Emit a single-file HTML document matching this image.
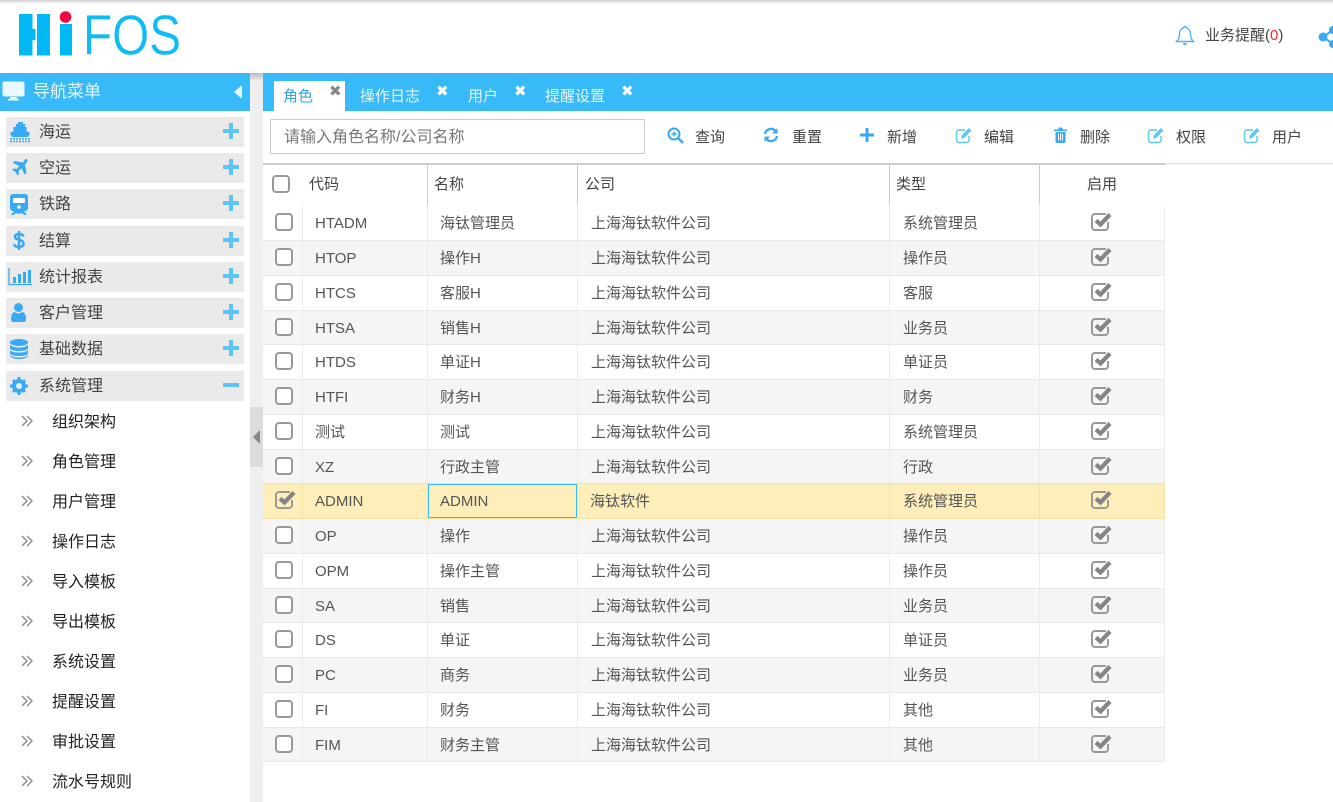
<!DOCTYPE html>
<html lang="zh"><head><meta charset="utf-8"><title>HiFOS</title>
<style>
*{box-sizing:border-box}
html,body{margin:0;padding:0;width:1333px;height:802px;overflow:hidden;background:#fff;font-family:"Liberation Sans","Noto Sans CJK SC",sans-serif;color:#555}
.a{position:absolute;white-space:nowrap}
svg{position:absolute;display:block}
.m{position:absolute;left:6px;width:238px;height:30px;background:#eaeaea;font-size:16px;line-height:32px;color:#444;padding-left:33px}
.m .p{position:absolute;left:217px;top:6px;width:16px;height:16px}
.m .p:before{content:"";position:absolute;left:0;top:6px;width:16px;height:4px;background:#5cc4f7}
.m .p:after{content:"";position:absolute;left:6px;top:0;width:4px;height:16px;background:#5cc4f7}
.m .q:after{display:none}
.s{position:absolute;left:52px;font-size:16px;line-height:24px;color:#222;white-space:nowrap}
.t{position:absolute;font-size:15px;line-height:20px;top:87px;color:#e6f6fe;white-space:nowrap}
.x{position:absolute;top:82px;font-size:15px;line-height:18px;font-weight:bold;color:#fff;font-family:"DejaVu Sans",sans-serif}
.b{position:absolute;top:128px;font-size:15px;line-height:20px;color:#444;white-space:nowrap}
.h{position:absolute;top:175px;font-size:15px;line-height:20px;color:#444;white-space:nowrap}
.r{position:absolute;left:263px;width:902px;height:36px;border-top:1px solid #e8e8e8;font-size:15px;line-height:35px;color:#555}
.w{background:#fff}.g{background:#f5f5f5}.y{background:#fdeeba;border-top-color:#f5e2a5}
.r span{position:absolute;top:0;white-space:nowrap}
.r i{position:absolute;top:0;width:1px;height:100%;background:#ebebeb}
.r b{position:absolute;left:12px;top:7px;width:18px;height:18px;border:2px solid #999;border-radius:4px;background:#fff}
.r u{position:absolute;left:828px;top:6px;width:22px;height:19px;text-decoration:none}
.y i{background:#f5e2a5}
</style></head><body>
<svg width="0" height="0" style="position:absolute"><defs>
<symbol id="ck" viewBox="0 0 22 19"><path d="M15 2H4a3 3 0 0 0-3 3v10a3 3 0 0 0 3 3h10a3 3 0 0 0 3-3v-5" fill="none" stroke="#999" stroke-width="2"/><path d="M5 8.500l4.500 4L19 2.500" fill="none" stroke="#858585" stroke-width="4.200"/></symbol>
<symbol id="ed" viewBox="0 0 18 18"><path d="M14 10v4a2.500 2.500 0 0 1-2.500 2.500H4A2.500 2.500 0 0 1 1.500 14V6.500A2.500 2.500 0 0 1 4 4h6" fill="none" stroke="#5cc4f7" stroke-width="1.400"/><path d="M6 12.500l.6-3L14 2l2.500 2.500L9 12z" fill="#5cc4f7"/></symbol>
<symbol id="ch" viewBox="0 0 12 12"><path d="M1 1l5 5-5 5M6 1l5 5-5 5" fill="none" stroke="#8a8a8a" stroke-width="1.400"/></symbol>
</defs></svg>

<!-- header -->
<div class="a" style="left:0;top:0;width:1333px;height:4px;background:linear-gradient(#cfcfcf,#fff)"></div>
<svg style="left:0;top:0" width="200" height="70">
<rect x="19" y="14" width="13.500" height="41.500" fill="#02b8f5"/><rect x="37" y="14" width="13" height="41.500" fill="#02b8f5"/><rect x="32" y="29" width="3.500" height="11" fill="#02b8f5"/>
<rect x="60" y="24" width="12" height="31.500" fill="#02b8f5"/><circle cx="65.500" cy="17" r="5.800" fill="#ee0a42"/>
<text x="83" y="54.500" font-family="Liberation Sans" font-size="57" fill="#0cbcf6" stroke="#fff" stroke-width="0.300" textLength="98" lengthAdjust="spacingAndGlyphs">FOS</text>
</svg>
<svg style="left:1175px;top:25px" width="20" height="21" viewBox="0 0 20 21"><path d="M10 1.500a1.500 1.500 0 0 1 1.500 1.500c3 .8 4 3.500 4 6 0 4 1 5.500 3 7.500H1.500c2-2 3-3.500 3-7.500 0-2.500 1-5.200 4-6A1.500 1.500 0 0 1 10 1.500z" fill="none" stroke="#4fb4f5" stroke-width="1.400"/><path d="M8 18a2 2 0 0 0 4 0z" fill="#4fb4f5"/></svg>
<div class="a" style="left:1205px;top:25px;font-size:15px;line-height:21px;color:#444">业务提醒(<span style="color:#f22">0</span>)</div>
<svg style="left:1318px;top:26px" width="15" height="22" viewBox="0 0 15 22"><circle cx="5" cy="11" r="4.500" fill="#38a9f5"/><circle cx="15" cy="4" r="4" fill="#38a9f5"/><circle cx="15" cy="18" r="4" fill="#38a9f5"/><path d="M5 11L15 4M5 11l10 7" stroke="#38a9f5" stroke-width="2"/></svg>

<!-- strip -->
<div class="a" style="left:250px;top:73px;width:13px;height:729px;background:#efefef"></div>
<div class="a" style="left:250px;top:73px;width:13px;height:8px;background:linear-gradient(#bbb,#efefef)"></div>
<div class="a" style="left:250px;top:407px;width:13px;height:60px;background:#dcdcdc"></div>
<svg style="left:253px;top:430px" width="8" height="14"><path d="M7 0v14L0 7z" fill="#888"/></svg>

<!-- nav title -->
<div class="a" style="left:0;top:73px;width:250px;height:38px;background:#38b9f8"></div>
<svg style="left:2px;top:81px" width="23" height="20" viewBox="0 0 23 20"><rect x="1" y="1" width="21" height="14" rx="1.500" fill="#eaf8ff" stroke="#eaf8ff"/><rect x="8" y="16" width="7" height="2" fill="#eaf8ff"/><rect x="6" y="18" width="11" height="1.500" fill="#eaf8ff"/></svg>
<div class="a" style="left:33px;top:80px;font-size:17px;line-height:24px;color:#e6f6fe">导航菜单</div>
<svg style="left:234px;top:85px" width="8" height="14"><path d="M8 0v14L0 7z" fill="#e6f6fe"/></svg>

<!-- menu -->
<div class="m" style="top:117px">海运<span class="p"></span></div>
<div class="m" style="top:153px">空运<span class="p"></span></div>
<div class="m" style="top:189px">铁路<span class="p"></span></div>
<div class="m" style="top:226px">结算<span class="p"></span></div>
<div class="m" style="top:262px">统计报表<span class="p"></span></div>
<div class="m" style="top:298px">客户管理<span class="p"></span></div>
<div class="m" style="top:334px">基础数据<span class="p"></span></div>
<div class="m" style="top:371px">系统管理<span class="p q"></span></div>

<svg style="left:9px;top:121px" width="23" height="22" viewBox="0 0 23 22"><path d="M9 1h5v2h2v3h1.500v4l3.500 2-2 4H3L1 12l3.500-2V6H7V3h2z" fill="#38aaf5"/><path d="M1 18h21M1 20.500h21" stroke="#38aaf5" stroke-width="1.500" stroke-dasharray="2 1"/></svg>
<svg style="left:11px;top:159px" width="17" height="17" viewBox="0 0 17 17"><path d="M14 0c2 0 3 1 2.500 2.500L14 5.500 15.500 14l-2 1.500-3-6.500-3 3 .5 3-1.500 1.500L4.500 13 1 11l1.500-1.500 3 .5 3-3L2 4l1.500-2L12 3.500l2-3z" fill="#38aaf5"/></svg>
<svg style="left:10px;top:194px" width="18" height="21" viewBox="0 0 18 21"><path d="M3 0h12a3 3 0 0 1 3 3v11a3 3 0 0 1-3 3H3a3 3 0 0 1-3-3V3a3 3 0 0 1 3-3z" fill="#38aaf5"/><rect x="3" y="4" width="12" height="5" rx="1" fill="#fff"/><circle cx="9" cy="13" r="1.800" fill="#fff"/><path d="M4 17h10l3 4h-3l-1-1.500H5L4 21H1z" fill="#38aaf5"/></svg>
<svg style="left:13px;top:230px" width="12" height="21" viewBox="0 0 12 21"><path d="M10.500 6.500C10 4.500 8 4 6 4 3.500 4 2 5 2 6.700c0 4 8.500 2 8.500 7 0 2-1.700 3.300-4.500 3.300-2.500 0-4.300-1-5-3" fill="none" stroke="#38aaf5" stroke-width="2.500"/><path d="M6 1v19" stroke="#38aaf5" stroke-width="2.500"/></svg>
<svg style="left:8px;top:268px" width="24" height="18" viewBox="0 0 24 18"><path d="M1 0v16.500h23" fill="none" stroke="#38aaf5" stroke-width="1.300"/><path d="M5 9h3v6H5zM10 6h3v9h-3zM15 4h3v11h-3zM20 2h3v13h-3z" fill="#38aaf5"/></svg>
<svg style="left:11px;top:303px" width="15" height="19" viewBox="0 0 15 19"><circle cx="7.500" cy="4.500" r="4.500" fill="#38aaf5"/><path d="M0 16c0-5 2-7 4-7 1 1 2 1.500 3.500 1.500S10 10 11 9c2 0 4 2 4 7 0 2-1 3-3 3H3c-2 0-3-1-3-3z" fill="#38aaf5"/></svg>
<svg style="left:10px;top:339px" width="18" height="20" viewBox="0 0 18 20"><ellipse cx="9" cy="3.500" rx="9" ry="3.500" fill="#38aaf5"/><path d="M0 5.500c1 2 5 3 9 3s8-1 9-3V9.500c-1 2-5 2.500-9 2.500s-8-.5-9-2.500zM0 11c1 2 5 2.500 9 2.500s8-.5 9-2.500v3.500c-1 2-5 2.500-9 2.500s-8-.5-9-2.500zM0 16c1 2 5 2.500 9 2.500s8-.5 9-2.500v1c-1 2-5 3-9 3s-8-1-9-3z" fill="#38aaf5"/></svg>
<svg style="left:10px;top:377px" width="18" height="18" viewBox="0 0 18 18"><circle cx="9" cy="9" r="5" fill="none" stroke="#38aaf5" stroke-width="4"/><path d="M7.500 0h3v4h-3zM7.500 14h3v4h-3zM0 7.500h4v3H0zM14 7.500h4v3h-4zM2 4l2-2 3 3-2 2zM11 13l2-2 3 3-2 2zM14 2l2 2-3 3-2-2zM5 11l2 2-3 3-2-2z" fill="#38aaf5"/></svg>

<svg style="left:21px;top:415px" width="12" height="12"><use href="#ch"/></svg><div class="s" style="top:411px">组织架构</div>
<svg style="left:21px;top:455px" width="12" height="12"><use href="#ch"/></svg><div class="s" style="top:451px">角色管理</div>
<svg style="left:21px;top:495px" width="12" height="12"><use href="#ch"/></svg><div class="s" style="top:491px">用户管理</div>
<svg style="left:21px;top:535px" width="12" height="12"><use href="#ch"/></svg><div class="s" style="top:531px">操作日志</div>
<svg style="left:21px;top:575px" width="12" height="12"><use href="#ch"/></svg><div class="s" style="top:571px">导入模板</div>
<svg style="left:21px;top:615px" width="12" height="12"><use href="#ch"/></svg><div class="s" style="top:611px">导出模板</div>
<svg style="left:21px;top:655px" width="12" height="12"><use href="#ch"/></svg><div class="s" style="top:651px">系统设置</div>
<svg style="left:21px;top:695px" width="12" height="12"><use href="#ch"/></svg><div class="s" style="top:691px">提醒设置</div>
<svg style="left:21px;top:735px" width="12" height="12"><use href="#ch"/></svg><div class="s" style="top:731px">审批设置</div>
<svg style="left:21px;top:775px" width="12" height="12"><use href="#ch"/></svg><div class="s" style="top:771px">流水号规则</div>

<!-- tabs -->
<div class="a" style="left:263px;top:73px;width:1070px;height:38px;background:#38b9f8"></div>
<div class="a" style="left:274px;top:81px;width:71px;height:30px;background:#fff"></div>
<div class="t" style="left:283px;color:#38a0e0">角色</div><div class="x" style="left:329px;color:#888">✖</div>
<div class="t" style="left:360px">操作日志</div><div class="x" style="left:436px">✖</div>
<div class="t" style="left:468px">用户</div><div class="x" style="left:514px">✖</div>
<div class="t" style="left:545px">提醒设置</div><div class="x" style="left:621px">✖</div>

<!-- toolbar -->
<div class="a" style="left:270px;top:119px;width:375px;height:35px;border:1px solid #ccc;font-size:16px;line-height:35px;padding-left:13px;color:#777">请输入角色名称/公司名称</div>
<svg style="left:667px;top:127px" width="17" height="17" viewBox="0 0 17 17"><circle cx="7" cy="7" r="5.500" fill="none" stroke="#38aaf5" stroke-width="2"/><path d="M11 11l5 5" stroke="#38aaf5" stroke-width="2.500"/><path d="M4.500 7h5M7 4.500v5" stroke="#38aaf5" stroke-width="1.500"/></svg>
<div class="b" style="left:695px">查询</div>
<svg style="left:763px;top:127px" width="16" height="16" viewBox="0 0 16 16"><path d="M2 7a6 6 0 0 1 10.500-3" fill="none" stroke="#38aaf5" stroke-width="2.400"/><path d="M14.500 1v5.500H9z" fill="#38aaf5"/><path d="M14 9a6 6 0 0 1-10.500 3" fill="none" stroke="#38aaf5" stroke-width="2.400"/><path d="M1.500 15V9.500H7z" fill="#38aaf5"/></svg>
<div class="b" style="left:792px">重置</div>
<svg style="left:860px;top:128px" width="14" height="14"><path d="M5.500 0h3v5.500H14v3H8.500V14h-3V8.500H0v-3h5.500z" fill="#38aaf5"/></svg>
<div class="b" style="left:887px">新增</div>
<svg style="left:955px;top:126px" width="18" height="18"><use href="#ed"/></svg>
<div class="b" style="left:984px">编辑</div>
<svg style="left:1054px;top:127px" width="13" height="16" viewBox="0 0 13 16"><path d="M0 2.500h13v1.500H0zM4 2.500L5 .5h3l1 2z" fill="#38aaf5"/><path d="M1.500 5h10v9.500a1.500 1.500 0 0 1-1.500 1.500H3a1.500 1.500 0 0 1-1.500-1.500z" fill="#38aaf5"/><path d="M4.500 6.500v7M6.500 6.500v7M8.500 6.500v7" stroke="#fff"/></svg>
<div class="b" style="left:1080px">删除</div>
<svg style="left:1147px;top:126px" width="18" height="18"><use href="#ed"/></svg>
<div class="b" style="left:1176px">权限</div>
<svg style="left:1243px;top:126px" width="18" height="18"><use href="#ed"/></svg>
<div class="b" style="left:1272px">用户</div>

<!-- table head -->
<div class="a" style="left:263px;top:163px;width:1070px;height:1px;background:#ddd"></div>
<div class="a" style="left:263px;top:163px;width:902px;height:2px;background:#ccc"></div>
<div class="a" style="left:427px;top:165px;width:1px;height:40px;background:#ccc"></div>
<div class="a" style="left:577px;top:165px;width:1px;height:40px;background:#ccc"></div>
<div class="a" style="left:889px;top:165px;width:1px;height:40px;background:#ccc"></div>
<div class="a" style="left:1039px;top:165px;width:1px;height:40px;background:#ccc"></div>
<div class="a" style="left:272px;top:175px;width:18px;height:18px;border:2px solid #999;border-radius:4px"></div>
<div class="h" style="left:309px">代码</div><div class="h" style="left:434px">名称</div><div class="h" style="left:585px">公司</div><div class="h" style="left:896px">类型</div><div class="h" style="left:1087px">启用</div>

<!-- rows -->
<div class="r w" style="top:205px;border-top-color:#fff"><b></b><i style="left:39px"></i><i style="left:164px"></i><i style="left:314px"></i><i style="left:626px"></i><i style="left:776px"></i><i style="left:901px"></i><span style="left:52px">HTADM</span><span style="left:177px">海钛管理员</span><span style="left:328px">上海海钛软件公司</span><span style="left:640px">系统管理员</span><u><svg width="22" height="19"><use href="#ck"/></svg></u></div>
<div class="r g" style="top:240px"><b></b><i style="left:39px"></i><i style="left:164px"></i><i style="left:314px"></i><i style="left:626px"></i><i style="left:776px"></i><i style="left:901px"></i><span style="left:52px">HTOP</span><span style="left:177px">操作H</span><span style="left:328px">上海海钛软件公司</span><span style="left:640px">操作员</span><u><svg width="22" height="19"><use href="#ck"/></svg></u></div>
<div class="r w" style="top:275px"><b></b><i style="left:39px"></i><i style="left:164px"></i><i style="left:314px"></i><i style="left:626px"></i><i style="left:776px"></i><i style="left:901px"></i><span style="left:52px">HTCS</span><span style="left:177px">客服H</span><span style="left:328px">上海海钛软件公司</span><span style="left:640px">客服</span><u><svg width="22" height="19"><use href="#ck"/></svg></u></div>
<div class="r g" style="top:310px"><b></b><i style="left:39px"></i><i style="left:164px"></i><i style="left:314px"></i><i style="left:626px"></i><i style="left:776px"></i><i style="left:901px"></i><span style="left:52px">HTSA</span><span style="left:177px">销售H</span><span style="left:328px">上海海钛软件公司</span><span style="left:640px">业务员</span><u><svg width="22" height="19"><use href="#ck"/></svg></u></div>
<div class="r w" style="top:344px"><b></b><i style="left:39px"></i><i style="left:164px"></i><i style="left:314px"></i><i style="left:626px"></i><i style="left:776px"></i><i style="left:901px"></i><span style="left:52px">HTDS</span><span style="left:177px">单证H</span><span style="left:328px">上海海钛软件公司</span><span style="left:640px">单证员</span><u><svg width="22" height="19"><use href="#ck"/></svg></u></div>
<div class="r g" style="top:379px"><b></b><i style="left:39px"></i><i style="left:164px"></i><i style="left:314px"></i><i style="left:626px"></i><i style="left:776px"></i><i style="left:901px"></i><span style="left:52px">HTFI</span><span style="left:177px">财务H</span><span style="left:328px">上海海钛软件公司</span><span style="left:640px">财务</span><u><svg width="22" height="19"><use href="#ck"/></svg></u></div>
<div class="r w" style="top:414px"><b></b><i style="left:39px"></i><i style="left:164px"></i><i style="left:314px"></i><i style="left:626px"></i><i style="left:776px"></i><i style="left:901px"></i><span style="left:52px">测试</span><span style="left:177px">测试</span><span style="left:328px">上海海钛软件公司</span><span style="left:640px">系统管理员</span><u><svg width="22" height="19"><use href="#ck"/></svg></u></div>
<div class="r g" style="top:449px"><b></b><i style="left:39px"></i><i style="left:164px"></i><i style="left:314px"></i><i style="left:626px"></i><i style="left:776px"></i><i style="left:901px"></i><span style="left:52px">XZ</span><span style="left:177px">行政主管</span><span style="left:328px">上海海钛软件公司</span><span style="left:640px">行政</span><u><svg width="22" height="19"><use href="#ck"/></svg></u></div>
<div class="r y" style="top:483px"><i style="left:39px"></i><i style="left:164px"></i><i style="left:314px"></i><i style="left:626px"></i><i style="left:776px"></i><i style="left:901px"></i><svg style="left:12px;top:6px" width="22" height="19"><use href="#ck"/></svg><span style="left:52px">ADMIN</span><span style="left:165px;width:149px;height:34px;border:1px solid #38b9f8;padding-left:11px;line-height:33px">ADMIN</span><span style="left:327px">海钛软件</span><span style="left:640px">系统管理员</span><u><svg width="22" height="19"><use href="#ck"/></svg></u></div>
<div class="r g" style="top:518px;border-top-color:#f5e2a5"><b></b><i style="left:39px"></i><i style="left:164px"></i><i style="left:314px"></i><i style="left:626px"></i><i style="left:776px"></i><i style="left:901px"></i><span style="left:52px">OP</span><span style="left:177px">操作</span><span style="left:328px">上海海钛软件公司</span><span style="left:640px">操作员</span><u><svg width="22" height="19"><use href="#ck"/></svg></u></div>
<div class="r w" style="top:553px"><b></b><i style="left:39px"></i><i style="left:164px"></i><i style="left:314px"></i><i style="left:626px"></i><i style="left:776px"></i><i style="left:901px"></i><span style="left:52px">OPM</span><span style="left:177px">操作主管</span><span style="left:328px">上海海钛软件公司</span><span style="left:640px">操作员</span><u><svg width="22" height="19"><use href="#ck"/></svg></u></div>
<div class="r g" style="top:588px"><b></b><i style="left:39px"></i><i style="left:164px"></i><i style="left:314px"></i><i style="left:626px"></i><i style="left:776px"></i><i style="left:901px"></i><span style="left:52px">SA</span><span style="left:177px">销售</span><span style="left:328px">上海海钛软件公司</span><span style="left:640px">业务员</span><u><svg width="22" height="19"><use href="#ck"/></svg></u></div>
<div class="r w" style="top:622px"><b></b><i style="left:39px"></i><i style="left:164px"></i><i style="left:314px"></i><i style="left:626px"></i><i style="left:776px"></i><i style="left:901px"></i><span style="left:52px">DS</span><span style="left:177px">单证</span><span style="left:328px">上海海钛软件公司</span><span style="left:640px">单证员</span><u><svg width="22" height="19"><use href="#ck"/></svg></u></div>
<div class="r g" style="top:657px"><b></b><i style="left:39px"></i><i style="left:164px"></i><i style="left:314px"></i><i style="left:626px"></i><i style="left:776px"></i><i style="left:901px"></i><span style="left:52px">PC</span><span style="left:177px">商务</span><span style="left:328px">上海海钛软件公司</span><span style="left:640px">业务员</span><u><svg width="22" height="19"><use href="#ck"/></svg></u></div>
<div class="r w" style="top:692px"><b></b><i style="left:39px"></i><i style="left:164px"></i><i style="left:314px"></i><i style="left:626px"></i><i style="left:776px"></i><i style="left:901px"></i><span style="left:52px">FI</span><span style="left:177px">财务</span><span style="left:328px">上海海钛软件公司</span><span style="left:640px">其他</span><u><svg width="22" height="19"><use href="#ck"/></svg></u></div>
<div class="r g" style="top:727px;height:35px;border-bottom:1px solid #e8e8e8"><b></b><i style="left:39px"></i><i style="left:164px"></i><i style="left:314px"></i><i style="left:626px"></i><i style="left:776px"></i><i style="left:901px"></i><span style="left:52px">FIM</span><span style="left:177px">财务主管</span><span style="left:328px">上海海钛软件公司</span><span style="left:640px">其他</span><u><svg width="22" height="19"><use href="#ck"/></svg></u></div>
</body></html>
